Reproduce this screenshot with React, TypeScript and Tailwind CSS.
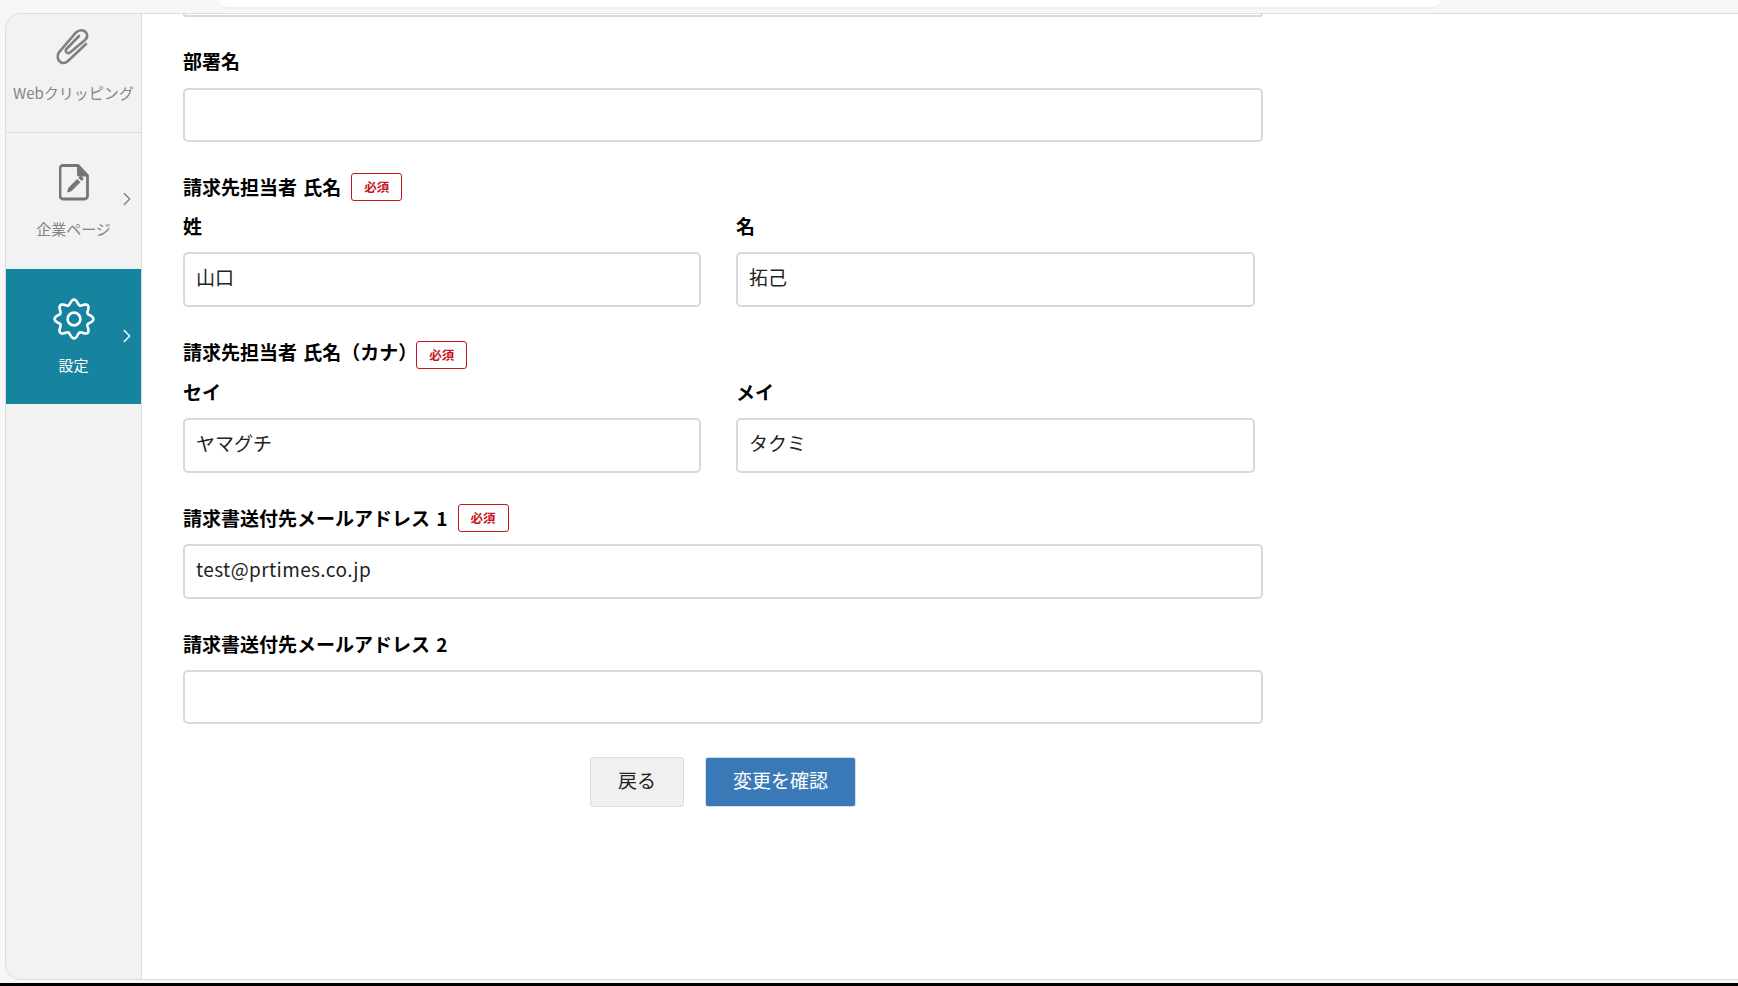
// Billing contact form page: left nav rail plus a stack of labelled inputs.
import { ChevronRight } from "lucide-react";

const FONT = "font-['Noto_Sans_CJK_JP','Noto_Sans',sans-serif]";

// ── Sidebar icons ─────────────────────────────────────────────────────────────

function ClipIcon() {
  return (
    <svg width="60" height="50" viewBox="0 0 60 50" fill="none" stroke="#808080" strokeWidth="2.6" strokeLinecap="round" aria-hidden="true" className="mr-[8px]">
      <path d="M46 24 L28 41 C23 45.5 16.5 41.5 18 34.5 C18.5 33 19 32 20 31 L36 12.5 C39 9.5 44 9.5 46 12.5 C48 15 47 18 45 20 L30 32.5 C28 34 25 32.5 26 29.5 L39 16" />
    </svg>
  );
}

function FilePenIcon() {
  return (
    <svg width="30" height="37" viewBox="0 0 30 37" aria-hidden="true">
      <path
        d="M4 1.5h15l9.5 10V32a3 3 0 0 1-3 3H4a3 3 0 0 1-3-3V4.5a3 3 0 0 1 3-3z"
        fill="none"
        stroke="#757575"
        strokeWidth="2.8"
      />
      <path d="M18 1.5l10.5 11H20a2 2 0 0 1-2-2z" fill="#757575" />
      <path d="M8 28.5l1.2-4.4 9-9 3.2 3.2-9 9z" fill="#757575" />
      <path d="M19.4 13.8l1.6-1.6a1 1 0 0 1 1.4 0l1.8 1.8a1 1 0 0 1 0 1.4l-1.6 1.6z" fill="#757575" />
    </svg>
  );
}

// Eight soft lobes, traced in polar form around the icon centre.
function gearPath(): string {
  const pts: string[] = [];
  for (let i = 0; i < 160; i++) {
    const a = (i / 160) * Math.PI * 2;
    const r = 17 + 2.4 * Math.cos(8 * a);
    pts.push(`${(22 + r * Math.sin(a)).toFixed(2)} ${(22 - r * Math.cos(a)).toFixed(2)}`);
  }
  return `M${pts.join("L")}Z`;
}

function GearIcon() {
  return (
    <svg width="44" height="44" viewBox="0 0 44 44" fill="none" stroke="white" strokeWidth="2.6" aria-hidden="true">
      <path d={gearPath()} strokeLinejoin="round" />
      <circle cx="22" cy="22" r="6.4" />
    </svg>
  );
}

// ── Sidebar ───────────────────────────────────────────────────────────────────

function Sidebar() {
  return (
    <aside className="flex w-[136px] shrink-0 flex-col border-r border-[#dcdcdc] bg-[#f2f2f2]">
      <div className="flex h-[119px] flex-col items-center border-b border-[#dcdcdc] pt-[6px]">
        <ClipIcon />
        <span className="mt-[12px] text-[15px] leading-[22px] text-[#858585]">Webクリッピング</span>
      </div>
      <div className="relative flex h-[136px] flex-col items-center pt-[31px]">
        <FilePenIcon />
        <span className="mt-[17px] text-[15px] leading-[22px] text-[#858585]">企業ページ</span>
        <ChevronRight size={22} strokeWidth={1.5} className="absolute left-[110px] top-[55px] text-[#808080]" />
      </div>
      <div className="relative flex h-[135px] flex-col items-center bg-[#17849f] pt-[28px] text-white">
        <GearIcon />
        <span className="mt-[13px] text-[15px] leading-[22px]">設定</span>
        <ChevronRight size={22} strokeWidth={1.5} className="absolute left-[110px] top-[56px]" />
      </div>
    </aside>
  );
}

// ── Form pieces ───────────────────────────────────────────────────────────────

function RequiredBadge({ className }: { className?: string }) {
  return (
    <span
      className={`flex h-[28px] w-[51px] items-center justify-center rounded-[3px] border border-[#c4161c] bg-white text-[12.5px] font-bold text-[#c4161c] ${className ?? ""}`}
    >
      必須
    </span>
  );
}

function Label({
  text,
  required,
  badgeClassName,
  className,
}: {
  text: string;
  required?: boolean;
  badgeClassName?: string;
  className?: string;
}) {
  return (
    <div className={`flex h-[30px] items-center ${required ? "gap-[10px]" : ""} ${className ?? ""}`}>
      <label className="text-[19px] font-bold leading-[30px] text-black [word-spacing:2px]">{text}</label>
      {required && <RequiredBadge className={badgeClassName} />}
    </div>
  );
}

function TextInput({ value, className }: { value?: string; className?: string }) {
  return (
    <input
      type="text"
      readOnly
      value={value ?? ""}
      className={`block rounded-[5px] border-2 border-[#d9d9d9] bg-white px-[11px] pb-[6px] text-[19px] text-[#222] outline-none ${className ?? ""}`}
    />
  );
}

function NameRow({ first, second }: { first: [string, string]; second: [string, string] }) {
  return (
    <div className="grid grid-cols-[518px_519px] gap-[35px]">
      {[first, second].map(([label, value]) => (
        <div key={label}>
          <Label text={label} />
          <TextInput value={value} className="mt-[11px] h-[55px] w-full" />
        </div>
      ))}
    </div>
  );
}

// ── Page ──────────────────────────────────────────────────────────────────────

export default function App() {
  return (
    <div className={`flex h-[986px] flex-col overflow-hidden bg-black ${FONT}`}>
      <div className="flex h-[983px] flex-col bg-[#f7f7f7]">
        {/* Top strip with the rounded edge of the browser address pill */}
        <div className="h-[13px] shrink-0">
          <div className="ml-[219px] h-[9px] w-[1221px] rounded-b-[16px] border-b-2 border-[#eeeeee] bg-white" />
        </div>

        <div className="ml-[5px] flex h-[967px] overflow-hidden rounded-l-[16px] border-y border-l border-[#dedede]">
          <Sidebar />

          <main className="flex-1 bg-white pl-[41px]">
            {/* Bottom edge of the input scrolled off the top */}
            <div className="h-[3px] w-[1080px] rounded-b-[5px] border-x-2 border-b-2 border-[#d9d9d9]" />

            <Label text="部署名" className="mt-[29px]" />
            <TextInput className="mt-[12px] h-[54px] w-[1080px]" />

            <Label text="請求先担当者 氏名" required className="mt-[30px]" />
            <div className="mt-[9px]">
              <NameRow first={["姓", "山口"]} second={["名", "拓己"]} />
            </div>

            <Label text="請求先担当者 氏名（カナ）" required badgeClassName="-ml-[11px] mt-[6px]" className="mt-[30px]" />
            <div className="mt-[10px]">
              <NameRow first={["セイ", "ヤマグチ"]} second={["メイ", "タクミ"]} />
            </div>

            <Label text="請求書送付先メールアドレス 1" required className="mt-[30px]" />
            <TextInput value="test@prtimes.co.jp" className="mt-[11px] h-[55px] w-[1080px] tracking-[0.4px]" />

            <Label text="請求書送付先メールアドレス 2" className="mt-[30px]" />
            <TextInput className="mt-[11px] h-[54px] w-[1080px]" />

            <div className="mt-[33px] flex gap-[21px] pl-[407px]">
              <button
                type="button"
                className="h-[50px] w-[94px] rounded-[3px] border border-[#dcdcdc] bg-[#f0f0f0] pb-[4px] text-[19px] text-[#222]"
              >
                戻る
              </button>
              <button
                type="button"
                className="h-[50px] w-[151px] rounded-[3px] border border-[#d5dfe9] bg-[#3a79b7] pb-[4px] text-[19px] text-white"
              >
                変更を確認
              </button>
            </div>
          </main>
        </div>
      </div>
    </div>
  );
}
